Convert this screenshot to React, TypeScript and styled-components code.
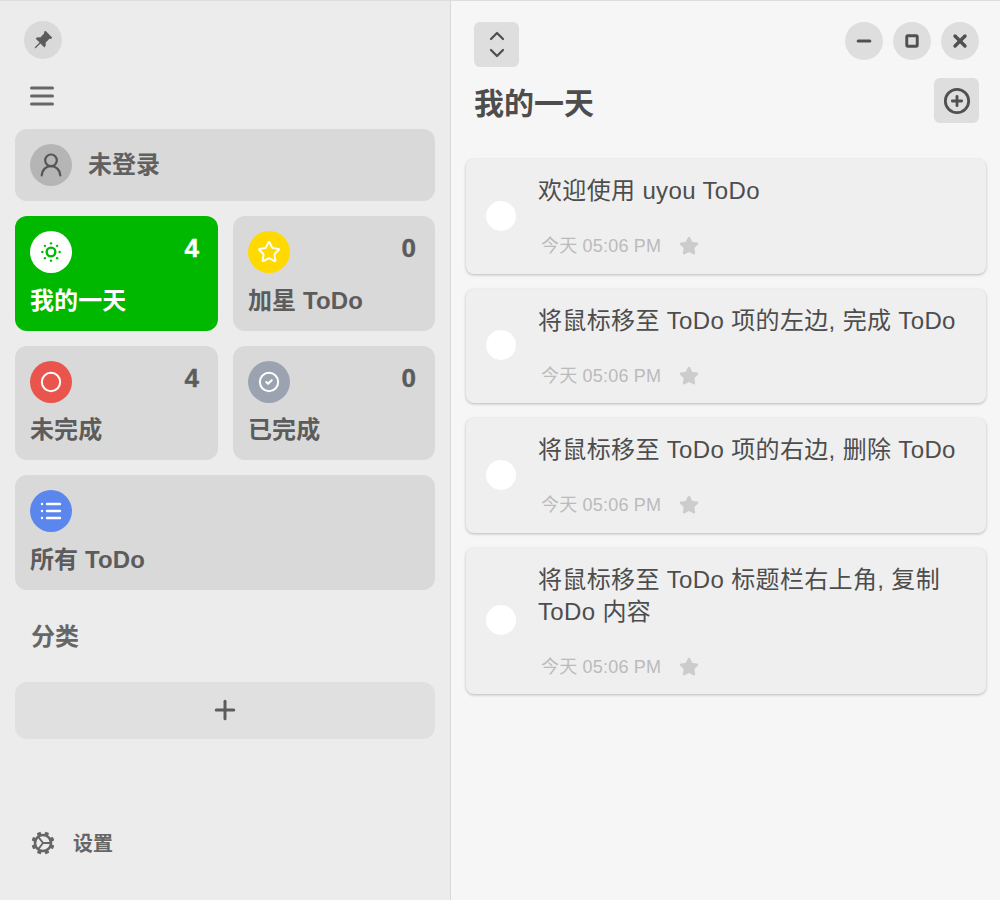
import React from 'react';
import styled, { createGlobalStyle } from 'styled-components';
import {
  ChevronDown,
  ChevronUp,
  CircleCheck,
  Circle,
  List,
  Minus,
  Plus,
  CirclePlus,
  Square,
  Star,
  SunDim,
  UserRound,
  X,
} from 'lucide-react';
import { BsPinAngleFill } from 'react-icons/bs';

const GlobalStyle = createGlobalStyle`
  html, body {
    margin: 0;
    padding: 0;
    background: #f6f6f6;
  }
  * {
    box-sizing: border-box;
  }
  body {
    font-family: "Liberation Sans", "Noto Sans CJK SC", sans-serif;
  }
`;

const Shell = styled.div`
  display: flex;
  width: 1000px;
  height: 900px;
  overflow: hidden;
  border-top: 1px solid #dcdcdc;
`;

const Sidebar = styled.aside`
  display: flex;
  flex-direction: column;
  width: 451px;
  height: 899px;
  padding: 0 15px;
  background: #ececec;
  border-right: 1px solid #d8d8d8;
  color: #606060;
`;

const PinButton = styled.div`
  display: flex;
  align-items: center;
  justify-content: center;
  width: 38px;
  height: 38px;
  margin: 20px 0 0 9px;
  border-radius: 50%;
  background: #d9d9d9;
  color: #5c5c5c;
`;

const MenuButton = styled.div`
  display: flex;
  width: 24px;
  height: 20px;
  margin: 27px 0 0 15px;
  color: #666;
`;

const UserCard = styled.div`
  display: flex;
  align-items: center;
  gap: 16px;
  width: 420px;
  height: 72px;
  margin-top: 23px;
  padding: 0 15px;
  border-radius: 12px;
  background: #d9d9d9;
  font-size: 24px;
  font-weight: 700;
  line-height: 30px;
`;

const Avatar = styled.div`
  display: flex;
  align-items: center;
  justify-content: center;
  width: 42px;
  height: 42px;
  border-radius: 50%;
  background: #b5b5b5;
  color: #555;
`;

const CardGrid = styled.div`
  display: grid;
  grid-template-columns: 203px 202px;
  grid-template-rows: 115px 114px 115px;
  gap: 15px;
  margin-top: 15px;
`;

const Card = styled.div<{ $active?: boolean; $wide?: boolean }>`
  display: flex;
  flex-direction: column;
  justify-content: space-between;
  padding: 15px 15px 14px;
  border-radius: 12px;
  grid-column: ${(p) => (p.$wide ? '1 / 3' : 'auto')};
  background: ${(p) => (p.$active ? '#00b800' : '#d9d9d9')};
  color: ${(p) => (p.$active ? '#fff' : '#5c5c5c')};
`;

const CardTop = styled.div`
  display: flex;
  align-items: flex-start;
  justify-content: space-between;
`;

const IconDisc = styled.div<{ $bg: string; $fg?: string }>`
  display: flex;
  align-items: center;
  justify-content: center;
  width: 42px;
  height: 42px;
  border-radius: 50%;
  background: ${(p) => p.$bg};
  color: ${(p) => p.$fg || '#fff'};
`;

const Count = styled.span`
  margin: 2px 4px 0 0;
  font-size: 26px;
  line-height: 30px;
  font-weight: 700;
  -webkit-text-stroke: 0.4px currentColor;
`;

const CardLabel = styled.div`
  font-size: 24px;
  line-height: 32px;
  font-weight: 700;
  letter-spacing: 0.1px;
`;

const SectionTitle = styled.div`
  margin: 30px 0 0 16px;
  font-size: 24px;
  line-height: 34px;
  font-weight: 700;
  color: #666;
`;

const AddCategory = styled.div`
  display: flex;
  align-items: center;
  justify-content: center;
  width: 420px;
  height: 57px;
  margin-top: 28px;
  padding-bottom: 2px;
  border-radius: 12px;
  background: #e0e0e0;
  color: #5c5c5c;
`;

const Settings = styled.div`
  display: flex;
  align-items: center;
  gap: 17px;
  margin: auto 0 43px 15px;
  font-size: 20px;
  font-weight: 700;
  color: #666;
`;

const Main = styled.main`
  display: flex;
  flex-direction: column;
  flex: 1;
  height: 899px;
  padding: 21px 14px 0 15px;
  background: #f6f6f6;
  color: #4d4d4d;
`;

const TopRow = styled.div`
  display: flex;
  align-items: flex-start;
  justify-content: space-between;
  padding: 0 7px 0 8px;
`;

const SquareButton = styled.div`
  display: flex;
  flex-direction: column;
  align-items: center;
  justify-content: center;
  width: 45px;
  height: 45px;
  border-radius: 6px;
  background: #dedede;
  color: #505050;
`;

const WindowButtons = styled.div`
  display: flex;
  gap: 10px;
`;

const RoundButton = styled.div`
  display: flex;
  align-items: center;
  justify-content: center;
  width: 38px;
  height: 38px;
  border-radius: 50%;
  background: #dedede;
  color: #505050;
`;

const TitleRow = styled.div`
  display: flex;
  align-items: flex-start;
  justify-content: space-between;
  margin-top: 11px;
  padding: 0 7px 0 8px;
`;

const Title = styled.h1`
  margin: 0;
  font-size: 30px;
  line-height: 52px;
  font-weight: 700;
  color: #4d4d4d;
`;

const TodoList = styled.div`
  display: flex;
  flex-direction: column;
  gap: 15px;
  margin-top: 29px;
`;

const Todo = styled.div`
  display: flex;
  align-items: center;
  width: 520px;
  padding: 16px 20px 14.5px 20px;
  border-radius: 8px;
  background: #efefef;
  box-shadow: 0 1px 3px rgba(0, 0, 0, 0.25);
`;

const Check = styled.div`
  flex: none;
  width: 30px;
  height: 30px;
  margin-top: -3px;
  border-radius: 50%;
  background: #fff;
`;

const TodoBody = styled.div`
  margin-left: 22px;
  min-width: 0;
`;

const TodoText = styled.div`
  min-height: 32px;
  font-size: 24px;
  line-height: 32px;
  letter-spacing: 0.35px;
  color: #4d4d4d;
`;

const Meta = styled.div`
  display: flex;
  align-items: center;
  gap: 18px;
  margin-top: 26px;
  padding-left: 3px;
  font-size: 18px;
  line-height: 26px;
  letter-spacing: 0.2px;
  color: #bbb;
`;

const MenuIcon = () => (
  <svg width="24" height="20" viewBox="0 0 24 20" fill="currentColor">
    <rect x="0" y="0.5" width="24" height="3" rx="1.5" />
    <rect x="0" y="8.5" width="24" height="3" rx="1.5" />
    <rect x="0" y="16.5" width="24" height="3" rx="1.5" />
  </svg>
);

const GearIcon = () => (
  <svg width="26" height="26" viewBox="0 0 26 26" fill="none" stroke="currentColor">
    <circle cx="13" cy="13" r="8" strokeWidth="2.6" />
    <path d="M13 13 L21 13 M13 13 L8 6.5 M13 13 L8 19.5" strokeWidth="2" />
    {[22, 67, 112, 157, 202, 247, 292, 337].map((a) => (
      <rect key={a} x="11" y="1.5" width="4" height="3.5" rx="0.8" fill="currentColor" stroke="none" transform={`rotate(${a} 13 13)`} />
    ))}
  </svg>
);

const todos = [
  '欢迎使用 uyou ToDo',
  '将鼠标移至 ToDo 项的左边, 完成 ToDo',
  '将鼠标移至 ToDo 项的右边, 删除 ToDo',
  '将鼠标移至 ToDo 标题栏右上角, 复制 ToDo 内容',
];

export default function App() {
  return (
    <>
      <GlobalStyle />
      <Shell>
        <Sidebar>
          <PinButton>
            <BsPinAngleFill size={20} />
          </PinButton>
          <MenuButton>
            <MenuIcon />
          </MenuButton>
          <UserCard>
            <Avatar>
              <UserRound size={28} strokeWidth={1.9} />
            </Avatar>
            <span>未登录</span>
          </UserCard>
          <CardGrid>
            <Card $active>
              <CardTop>
                <IconDisc $bg="#fff" $fg="#00b800">
                  <SunDim size={26} strokeWidth={2.2} />
                </IconDisc>
                <Count>4</Count>
              </CardTop>
              <CardLabel>我的一天</CardLabel>
            </Card>
            <Card>
              <CardTop>
                <IconDisc $bg="#ffd900">
                  <Star size={24} strokeWidth={2} />
                </IconDisc>
                <Count>0</Count>
              </CardTop>
              <CardLabel>加星 ToDo</CardLabel>
            </Card>
            <Card>
              <CardTop>
                <IconDisc $bg="#e9554c">
                  <Circle size={22} strokeWidth={2.2} />
                </IconDisc>
                <Count>4</Count>
              </CardTop>
              <CardLabel>未完成</CardLabel>
            </Card>
            <Card>
              <CardTop>
                <IconDisc $bg="#9ba3b1">
                  <CircleCheck size={22} strokeWidth={2.2} />
                </IconDisc>
                <Count>0</Count>
              </CardTop>
              <CardLabel>已完成</CardLabel>
            </Card>
            <Card $wide>
              <CardTop>
                <IconDisc $bg="#5b86ee">
                  <List size={24} strokeWidth={2.4} />
                </IconDisc>
              </CardTop>
              <CardLabel>所有 ToDo</CardLabel>
            </Card>
          </CardGrid>
          <SectionTitle>分类</SectionTitle>
          <AddCategory>
            <Plus size={30} strokeWidth={2.4} />
          </AddCategory>
          <Settings>
            <GearIcon />
            设置
          </Settings>
        </Sidebar>
        <Main>
          <TopRow>
            <SquareButton>
              <ChevronUp size={24} strokeWidth={2.3} style={{ marginBottom: -3.6 }} />
              <ChevronDown size={24} strokeWidth={2.3} style={{ marginTop: -3.6 }} />
            </SquareButton>
            <WindowButtons>
              <RoundButton>
                <Minus size={20} strokeWidth={3.6} />
              </RoundButton>
              <RoundButton>
                <Square size={14} strokeWidth={5} />
              </RoundButton>
              <RoundButton>
                <X size={20} strokeWidth={4} />
              </RoundButton>
            </WindowButtons>
          </TopRow>
          <TitleRow>
            <Title>我的一天</Title>
            <SquareButton>
              <CirclePlus size={28} strokeWidth={2.4} />
            </SquareButton>
          </TitleRow>
          <TodoList>
            {todos.map((t) => (
              <Todo key={t}>
                <Check />
                <TodoBody>
                  <TodoText>{t}</TodoText>
                  <Meta>
                    今天 05:06 PM
                    <Star size={20} fill="#ccc" stroke="#ccc" />
                  </Meta>
                </TodoBody>
              </Todo>
            ))}
          </TodoList>
        </Main>
      </Shell>
    </>
  );
}
